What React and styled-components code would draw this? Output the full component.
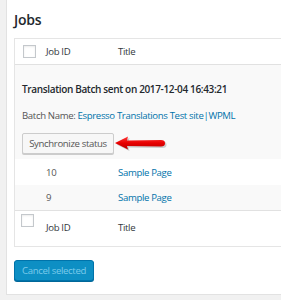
import styled, { createGlobalStyle } from "styled-components";

const GlobalStyle = createGlobalStyle`
  html, body {
    margin: 0;
    padding: 0;
    background: #f1f1f1;
  }
  body {
    font-family: "Open Sans", "Noto Sans", sans-serif;
    color: #23282d;
  }
`;

const jobs = [
  { id: 10, title: "Sample Page" },
  { id: 9, title: "Sample Page" },
];

export default function App() {
  return (
    <>
      <GlobalStyle />
      <Page>
        <Panel>
          <Heading>Jobs</Heading>
          <Table>
            <Row $height={26} $border>
              <Check $left={8} />
              <Cell>Job ID</Cell>
              <Cell>Title</Cell>
            </Row>
            <Batch>
              <BatchTitle>Translation Batch sent on 2017-12-04 16:43:21</BatchTitle>
              <BatchName>
                Batch Name: <Link>Espresso Translations Test site|WPML</Link>
              </BatchName>
              <SyncWrap>
                <SyncButton>Synchronize status</SyncButton>
                <Arrow />
              </SyncWrap>
            </Batch>
            {jobs.map((job, i) => (
              <Row key={job.id} $height={i === 0 ? 26 : 25} $striped={i % 2 === 1}>
                <span />
                <IdCell>{job.id}</IdCell>
                <Link>{job.title}</Link>
              </Row>
            ))}
            <Row $height={36} $top>
              <Check $left={6} $top={3} />
              <Cell $pad={10}>Job ID</Cell>
              <Cell $pad={10}>Title</Cell>
            </Row>
          </Table>
          <CancelButton disabled>Cancel selected</CancelButton>
        </Panel>
      </Page>
    </>
  );
}

function Arrow() {
  return (
    <ArrowSvg width="56" height="20" viewBox="0 0 56 20">
      <defs>
        <linearGradient id="arrowRed" x1="0" y1="0" x2="0" y2="1">
          <stop offset="0" stopColor="#ff3b3b" />
          <stop offset="0.5" stopColor="#e80000" />
          <stop offset="1" stopColor="#b80000" />
        </linearGradient>
      </defs>
      <path
        d="M2 10 L15 3.5 L14 7.5 L48 7 Q52 7 52 10.3 Q52 13.5 48 13.5 L14 13 L15 16.5 Z"
        fill="#000"
        opacity="0.18"
        transform="translate(1.5 1.5)"
      />
      <path
        d="M2 10 L15 3.5 L14 7.5 L48 7 Q52 7 52 10.3 Q52 13.5 48 13.5 L14 13 L15 16.5 Z"
        fill="url(#arrowRed)"
      />
    </ArrowSvg>
  );
}

const Page = styled.div`
  padding-left: 6px;
  height: 300px;
  box-sizing: border-box;
  overflow: hidden;
`;

const Panel = styled.div`
  background: #fff;
  border-left: 1px solid #e2e2e2;
  border-bottom: 1px solid #e2e2e2;
  padding: 10px 0 0 7px;
  height: 295px;
  box-sizing: border-box;
`;

const Heading = styled.h2`
  margin: 0 0 9px;
  font-size: 14px;
  font-weight: 600;
  line-height: 19px;
  letter-spacing: -0.2px;
  color: #23282d;
`;

const Table = styled.div`
  border: 1px solid #e5e5e5;
  border-right: none;
  font-size: 9.6px;
  letter-spacing: -0.35px;
`;

const Row = styled.div`
  display: grid;
  grid-template-columns: 31px 72px 1fr;
  align-items: ${(p) => (p.$top ? "start" : "center")};
  height: ${(p) => p.$height}px;
  box-sizing: border-box;
  background: ${(p) => (p.$striped ? "#f9f9f9" : "#fff")};
  border-bottom: ${(p) => (p.$border ? "1px solid #e1e1e1" : "none")};
  border-top: ${(p) => (p.$top ? "1px solid #e1e1e1" : "none")};
`;

const Check = styled.span`
  display: block;
  width: 11px;
  height: 11px;
  margin-left: ${(p) => p.$left}px;
  margin-top: ${(p) => p.$top || 0}px;
  border: 1px solid #c4c8cc;
  background: #fff;
  box-shadow: inset 0 1px 2px rgba(0, 0, 0, 0.08);
`;

const Cell = styled.span`
  color: #32373c;
  padding-top: ${(p) => p.$pad || 0}px;
`;

const IdCell = styled.span`
  color: #555;
`;

const Link = styled.span`
  color: #0073aa;
`;

const Batch = styled.div`
  background: #f9f9f9;
  height: 94px;
  box-sizing: border-box;
  padding: 17px 0 0 7px;
`;

const BatchTitle = styled.div`
  font-size: 10px;
  font-weight: 600;
  color: #23282d;
  line-height: 14px;
`;

const BatchName = styled.div`
  margin-top: 13px;
  line-height: 14px;
  color: #555;
  white-space: nowrap;
`;

const SyncWrap = styled.div`
  position: relative;
  display: inline-block;
  margin-top: 10px;
`;

const SyncButton = styled.button`
  display: block;
  height: 21px;
  width: 92px;
  padding: 0;
  border: 1px solid #ccc;
  border-radius: 2px;
  background: #f7f7f7;
  box-shadow: 0 1px 0 #ccc;
  font-family: inherit;
  font-size: 9.6px;
  letter-spacing: -0.35px;
  white-space: nowrap;
  color: #555;
`;

const ArrowSvg = styled.svg`
  position: absolute;
  left: calc(100% - 1px);
  top: 0;
`;

const CancelButton = styled.button`
  display: block;
  margin-top: 13px;
  width: 80px;
  height: 21px;
  padding: 0;
  border: 1px solid #0073aa;
  border-radius: 3px;
  background: #0d8fc4;
  box-shadow: 0 1px 0 #006799;
  font-family: inherit;
  font-size: 9.6px;
  letter-spacing: -0.35px;
  white-space: nowrap;
  color: #7ccbeb;
`;
